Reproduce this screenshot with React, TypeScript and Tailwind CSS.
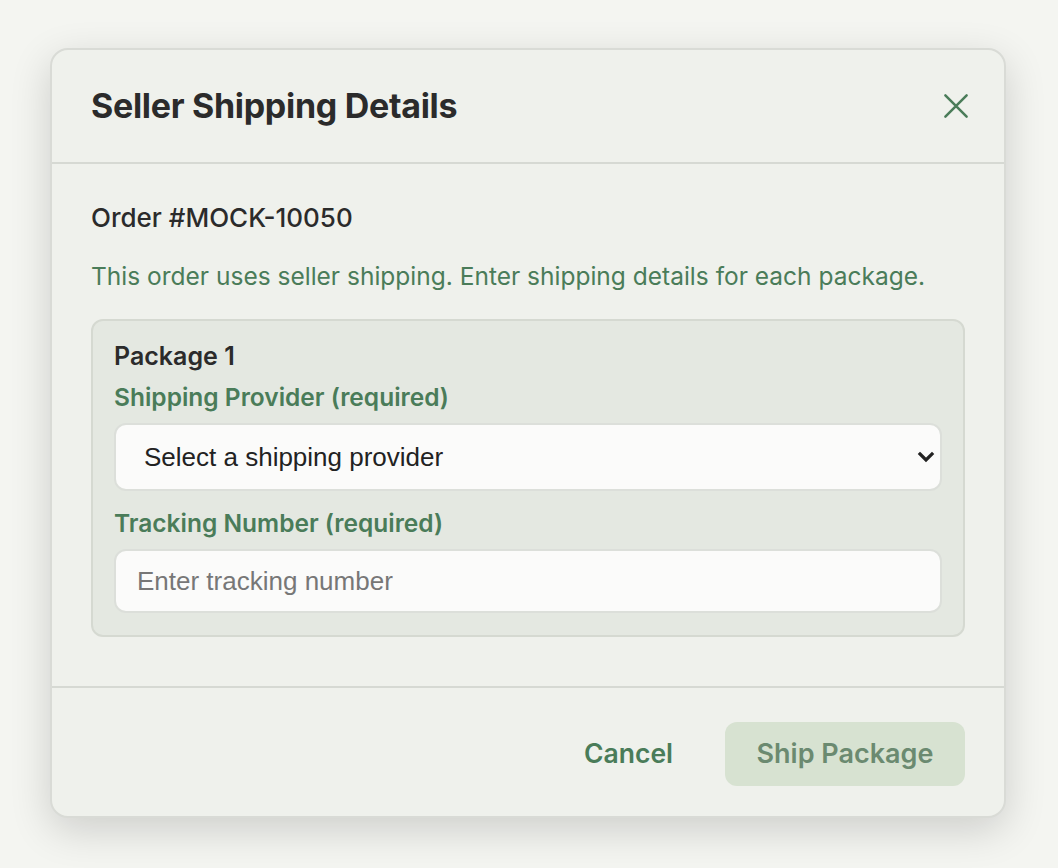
import React, { useState } from 'react';

/**
 * Seller shipping dialog - one package with provider select and tracking number
 */
const CloseIcon: React.FC = () => (
  <svg width="30" height="30" viewBox="0 0 24 24" fill="none" stroke="currentColor" strokeWidth="2" strokeLinecap="round">
    <path d="M3.5 3.5l17 17M20.5 3.5l-17 17" />
  </svg>
);

const ChevronDown: React.FC = () => (
  <svg width="18" height="12" viewBox="0 0 18 12" fill="none" stroke="#222" strokeWidth="3.2" strokeLinecap="square">
    <path d="M3 3l6 6 6-6" />
  </svg>
);

export default function App() {
  const [provider, setProvider] = useState('');
  const [tracking, setTracking] = useState('');

  const canShip = provider !== '' && tracking.trim() !== '';

  return (
    <div className="min-h-[868px] w-full bg-[#f4f5f1] pt-[48px] pl-[50px] font-['Inter','Liberation_Sans',sans-serif]">
      <div className="w-[956px] h-[770px] flex flex-col rounded-[18px] border-2 border-[#d9dbd6] bg-[#eff1ec] shadow-[0_12px_40px_rgba(0,0,0,0.16)]">
        {/* Header */}
        <div className="h-[114px] flex items-center justify-between pl-[39px] pr-[33px] border-b-2 border-[#d6d9d3]">
          <h2 className="text-[34px] font-bold leading-[40px] text-[#2b2b2b] tracking-[-0.3px]">Seller Shipping Details</h2>
          <button className="text-[#4a7c59]">
            <CloseIcon />
          </button>
        </div>

        {/* Body */}
        <div className="flex-1 px-[39px] pt-[39px]">
          <p className="text-[26px] font-medium leading-[30px] text-[#2b2b2b]">Order #MOCK-10050</p>
          <p className="mt-[28px] text-[24.5px] leading-[30px] text-[#4a7c59]">
            This order uses seller shipping. Enter shipping details for each package.
          </p>

          <div className="mt-[28px] rounded-[12px] border-2 border-[#d5d9d1] bg-[#e4e8e1] px-[21px] pt-[20px] pb-[22px]">
            <p className="text-[25px] font-semibold leading-[30px] text-[#2b2b2b]">Package 1</p>
            <label className="mt-[12px] block text-[24.5px] font-semibold leading-[28px] text-[#4a7c59]">
              Shipping Provider (required)
            </label>
            <div className="relative mt-[12px]">
              <select
                value={provider}
                onChange={(e) => setProvider(e.target.value)}
                className="block w-full h-[68px] appearance-none rounded-[12px] border-2 border-[#dcdfda] bg-[#fbfbfa] pl-[28px] pr-[48px] text-[26px] text-[#222] font-['Liberation_Sans',Arial,sans-serif] outline-none"
              >
                <option value="">Select a shipping provider</option>
                <option value="usps">USPS</option>
                <option value="ups">UPS</option>
                <option value="fedex">FedEx</option>
              </select>
              <span className="pointer-events-none absolute right-[7px] top-1/2 -translate-y-1/2">
                <ChevronDown />
              </span>
            </div>

            <label className="mt-[18px] block text-[24.5px] font-semibold leading-[28px] text-[#4a7c59]">
              Tracking Number (required)
            </label>
            <input
              value={tracking}
              onChange={(e) => setTracking(e.target.value)}
              placeholder="Enter tracking number"
              className="mt-[12px] block w-full h-[64px] rounded-[12px] border-2 border-[#dcdfda] bg-[#fbfbfa] px-[21px] text-[26px] text-[#222] placeholder:text-[#777] font-['Liberation_Sans',Arial,sans-serif] outline-none"
            />
          </div>
        </div>

        {/* Footer */}
        <div className="h-[130px] flex items-center justify-end gap-[52px] pt-[4px] pr-[39px] border-t-2 border-[#d6d9d3]">
          <button className="text-[26.5px] font-semibold text-[#4a7c59]">Cancel</button>
          <button
            disabled={!canShip}
            className={
              canShip
                ? 'h-[64px] w-[240px] rounded-[12px] bg-[#4a7c59] text-[27px] font-semibold text-white'
                : 'h-[64px] w-[240px] rounded-[12px] bg-[#d7e2d1] text-[27px] font-semibold text-[#6b8a70]'
            }
          >
            Ship Package
          </button>
        </div>
      </div>
    </div>
  );
}
